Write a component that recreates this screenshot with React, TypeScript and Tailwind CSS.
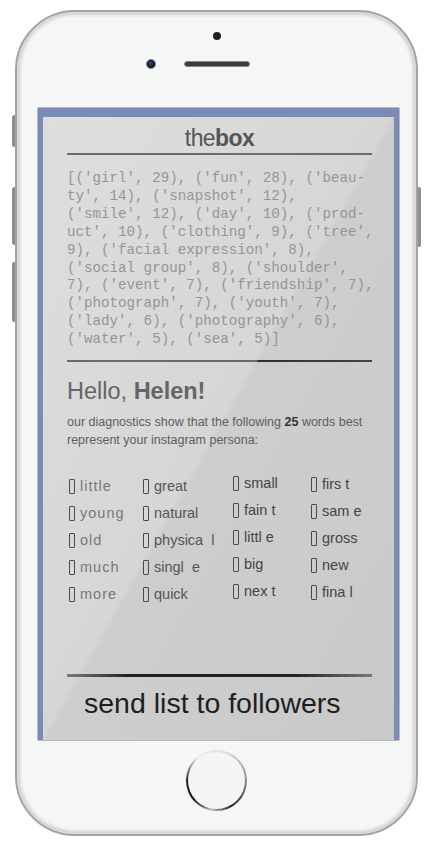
import React from 'react';

const sans = { fontFamily: '"Liberation Sans", Arial, sans-serif' };

const tuples = [
  "[('girl', 29), ('fun', 28), ('beau-",
  "ty', 14), ('snapshot', 12),",
  "('smile', 12), ('day', 10), ('prod-",
  "uct', 10), ('clothing', 9), ('tree',",
  "9), ('facial expression', 8),",
  "('social group', 8), ('shoulder',",
  "7), ('event', 7), ('friendship', 7),",
  "('photograph', 7), ('youth', 7),",
  "('lady', 6), ('photography', 6),",
  "('water', 5), ('sea', 5)]",
];

const columns = [
  { words: ['little', 'young', 'old', 'much', 'more'], width: 'w-[74px]', track: 'tracking-[1px] text-[#777]' },
  { words: ['great', 'natural', 'physica  l', 'singl  e', 'quick'], width: 'w-[90px]', track: 'text-[#555]' },
  { words: ['small', 'fain t', 'littl e', 'big', 'nex t'], width: 'w-[78px]', track: 'text-[#444] -mt-[3px]' },
  { words: ['firs t', 'sam e', 'gross', 'new', 'fina l'], width: 'w-[60px]', track: 'text-[#444] -mt-[2px]' },
];

function Tofu() {
  return <span className="inline-block w-[6px] h-[15px] border border-[#4a4a4a] rounded-[1px] mr-[5px] shrink-0" />;
}

function WordColumn({ words, width, track }: { words: string[]; width: string; track: string }) {
  return (
    <div className={`flex flex-col gap-[10px] ${width} ${track}`}>
      {words.map((w) => (
        <div key={w} className="flex items-center h-[17px] whitespace-pre text-[14.5px]">
          <Tofu />
          {w}
        </div>
      ))}
    </div>
  );
}

function Screen() {
  return (
    <div className="ml-[20px] w-[363px] h-[634px] border border-[#b8b8b8] rounded-[2px] bg-white">
      <div className="h-full border-t-[9px] border-x-[5px] border-[#7b8bb7] bg-[linear-gradient(to_bottom_right,#dedede_0%,#d6d6d6_49.6%,#cecece_50.4%,#c9c9c9_100%)] pl-[24px] pr-[22px] flex flex-col" style={sans}>
        <div className="mt-[8px] text-center text-[23px] leading-[26px] tracking-[-0.6px] text-[#555]">
          the<span className="font-bold">box</span>
        </div>
        <div className="mt-[2px] h-[2px] bg-[#6b6b6b]" />
        <pre className="mt-[15px] text-[14.2px] leading-[17.9px] text-[#959595]" style={{ fontFamily: '"Liberation Mono", "Courier New", monospace' }}>
          {tuples.join('\n')}
        </pre>
        <div className="mt-[11px] h-[2px] bg-[linear-gradient(to_right,#6a6a6a_62%,#2e2e2e_63%,#444_100%)]" />
        <div className="mt-[15px] text-[23.5px] leading-[28px] text-[#666]">
          Hello, <span className="font-bold">Helen!</span>
        </div>
        <p className="mt-[8px] text-[12.5px] leading-[18px] text-[#5e5e5e]">
          our diagnostics show that the following <span className="font-bold text-[#333]">25</span> words best represent your instagram persona:
        </p>
        <div className="mt-[29px] flex pl-[2px]">
          {columns.map((c, i) => (
            <WordColumn key={i} {...c} />
          ))}
        </div>
        <div className="mt-[71px] h-[3px] bg-[linear-gradient(to_right,#7a7a7a_0%,#222_20%,#222_75%,#777_100%)]" />
        <div className="mt-[10px] pl-[17px] text-[28.5px] leading-[32px] text-[#1e1e1e]">send list to followers</div>
      </div>
    </div>
  );
}

export default function App() {
  return (
    <div className="w-[443px] h-[864px] bg-white pl-[15px] pt-[10px]">
      <div className="relative w-[403px] h-[826px] rounded-[60px] border-2 border-[#a3a3a3] bg-[#f5f6f6] shadow-[inset_0_0_0_3px_#d9d9d9,inset_0_0_0_5px_#ececec]">
        {/* side buttons */}
        <div className="absolute -left-[5px] top-[103px] w-[3px] h-[32px] rounded-l-[2px] bg-[#8f8f8f]" />
        <div className="absolute -left-[5px] top-[175px] w-[3px] h-[58px] rounded-l-[2px] bg-[#8f8f8f]" />
        <div className="absolute -left-[5px] top-[250px] w-[3px] h-[60px] rounded-l-[2px] bg-[#8f8f8f]" />
        <div className="absolute -right-[5px] top-[175px] w-[3px] h-[60px] rounded-r-[2px] bg-[#8f8f8f]" />

        <div className="h-[95px] flex flex-col items-center">
          <div className="mt-[20px] w-[8px] h-[8px] rounded-full bg-[#1f1f1f]" />
          <div className="mt-[19px] flex items-center">
            <div className="w-[10px] h-[10px] rounded-full bg-[radial-gradient(circle_at_45%_40%,#3a4f8a_0%,#1a2138_45%,#111_80%)] border border-[#777]" />
            <div className="w-[28px]" />
            <div className="w-[66px] h-[6px] rounded-full bg-[#3d3d3d] border border-[#888]" />
            <div className="w-[38px]" />
          </div>
        </div>
        <Screen />
        <div className="mt-[9px] flex justify-center">
          <div className="w-[61px] h-[61px] rounded-full p-[2px] bg-[conic-gradient(from_20deg,#ddd_0deg,#999_60deg,#222_130deg,#bbb_170deg,#111_210deg,#222_250deg,#eee_300deg,#ddd_360deg)]">
            <div className="w-full h-full rounded-full bg-[#f4f5f5]" />
          </div>
        </div>
      </div>
    </div>
  );
}
